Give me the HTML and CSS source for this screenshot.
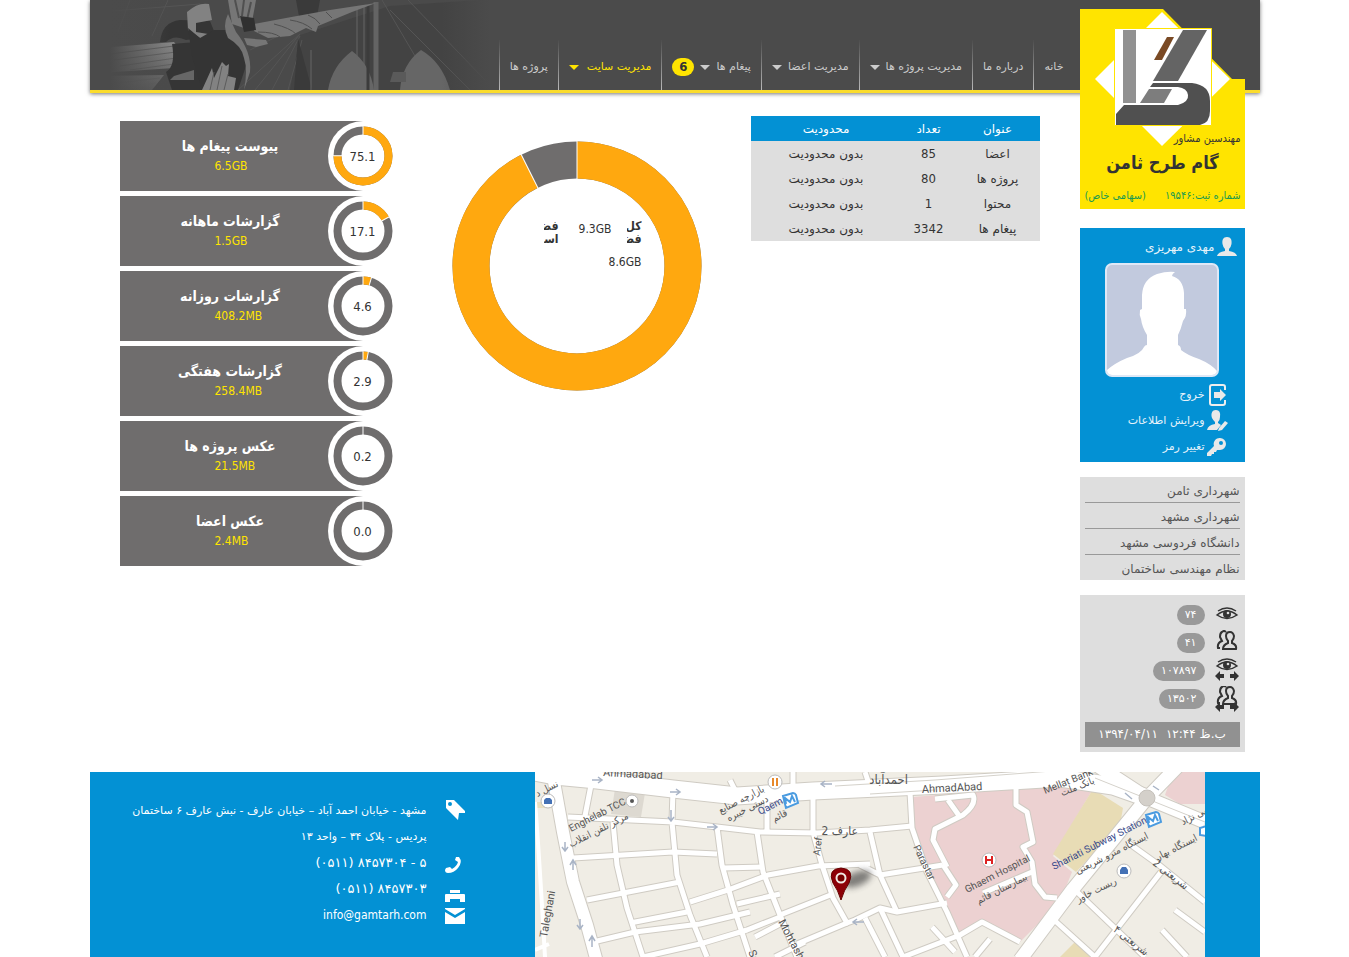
FILE: index.html
```html
<!DOCTYPE html>
<html lang="fa" dir="rtl">
<head>
<meta charset="utf-8">
<meta name="viewport" content="width=device-width, initial-scale=1">
<title>گام طرح ثامن</title>
<link rel="stylesheet" href="styles.css">
</head>
<body>
<div class="page">
  <header class="header">
    <svg class="header-photo" viewBox="0 0 400 90" aria-hidden="true">
      <defs>
        <linearGradient id="fade" x1="0" x2="1" y1="0" y2="0">
          <stop offset="0" stop-color="#4b4b4b"/><stop offset=".05" stop-color="#4b4b4b"/><stop offset=".2" stop-color="#4b4b4b" stop-opacity="0"/>
          <stop offset=".88" stop-color="#4b4b4b" stop-opacity="0"/><stop offset="1" stop-color="#4b4b4b"/>
        </linearGradient>
        <linearGradient id="rope" x1="0" x2="0" y1="0" y2="1">
          <stop offset="0" stop-color="#868686"/><stop offset="1" stop-color="#5c5c5c"/>
        </linearGradient>
      </defs>
      <rect width="400" height="90" fill="#4a4a4a"/>
      <path d="M210 35L300 6 390 0H400V90H200z" fill="#434343"/>
      <path d="M40 0L28 32M78 0L62 36M10 12L110 4M210 34L148 90M210 34L165 90M210 36L182 90M212 40L198 90M160 50L240 10M300 10L380 90M292 0L345 90M318 0L395 80" stroke="#555" fill="none"/>
      <path d="M208 38L222 90H204zM206 0H230L226 22H210z" fill="#3a3a3a"/>
      <path d="M238 90Q242 66 262 51Q280 64 284 90zM310 90Q312 64 331 50Q352 62 360 90z" fill="#666"/>
      <path d="M221 50V90M267 6V90M274 6V90" stroke="#666"/>
      <path d="M286 2V90" stroke="#646464" stroke-width="5"/>
      <path d="M278 4V90" stroke="#3c3c3c" stroke-width="3"/>
      <path d="M303 72H316V82H300z" fill="#5a5a5a"/>
      <path d="M10 48L84 42Q92 50 84 68L10 73zM10 76L74 75 62 90H10z" fill="url(#rope)"/>
      <path d="M20 54L84 46M24 60L86 52M30 66L86 58M40 70L84 64M20 84L70 78M40 88L66 83" stroke="#606060" fill="none"/>
      <path d="M70 42Q72 22 90 20L120 21 126 36 96 40Q84 34 76 42zM82 44L106 42 112 90H82L76 72Q86 66 82 44z" fill="#353535"/>
      <path d="M84 76L104 70 104 80 80 80z" fill="#666"/>
      <path d="M97 12Q108 2 119 4L122 20 106 23V32L118 34 116 42 98 30z" fill="#828282"/>
      <path d="M98 28L110 38 124 30 140 30 158 60 148 90H112L102 56z" fill="#343434"/>
      <path d="M138 0H166L162 22 154 28 142 24z" fill="#767676"/>
      <path d="M145 0L149 18M154 0L152 16M161 2L157 20" stroke="#505050" stroke-width="2"/>
      <path d="M138 14Q132 26 138 38Q152 46 154 58Q158 70 154 90L160 72Q162 52 146 32z" fill="#747474"/>
      <path d="M112 90L122 68 124 78 132 62 136 66 139 64 138 76 146 78 144 90z" fill="#828282"/>
      <path d="M124 72L120 90M132 66L127 90M138 74L134 90" stroke="#5c5c5c"/>
      <path d="M164 24L196 18 240 10 286 3 262 12 228 26 226 32 216 28 200 36 178 38 164 31zM154 38L176 40 178 44 166 47 157 45z" fill="#767676"/>
      <path d="M168 32Q184 32 190 37M184 24Q200 28 206 34M200 20Q214 22 222 29M218 15Q226 18 230 24M236 12L242 18" stroke="#505050" fill="none"/>
      <path d="M150 16L164 18 166 30 154 32z" fill="#303030"/>
      <rect width="400" height="90" fill="url(#fade)"/>
    </svg>
    <nav class="nav" aria-label="منوی اصلی">
      <a class="nav-item" href="#">خانه</a>
      <a class="nav-item" href="#">درباره ما</a>
      <a class="nav-item" href="#">مدیریت پروژه ها <i class="caret"></i></a>
      <a class="nav-item" href="#">مدیریت اعضا <i class="caret"></i></a>
      <a class="nav-item" href="#">پیغام ها <i class="caret"></i><b class="count">6</b></a>
      <a class="nav-item nav-item-active" href="#">مدیریت سایت <i class="caret"></i></a>
      <a class="nav-item" href="#">پروژه ها</a>
    </nav>
  </header>

  <div class="body">
    <aside class="sidebar">
      <a class="logo" href="#">
        <svg class="logo-art" viewBox="0 0 165 200" aria-hidden="true">
          <path d="M0 0H83L152 70H165V200H0z" fill="#ffe400"/>
          <path d="M82 3L150 70 82 137 15 70z" fill="#fff"/>
          <path d="M34.500 19.500H131.500V116.500H34.500z" fill="#fff" stroke="#ffe400"/>
          <path d="M43 21H56V94H43z" fill="#919191"/>
          <path d="M103 21H127L98 72H73z" fill="#646464"/>
          <path d="M87 28H94L82 51H74z" fill="#7a4a25"/>
          <path d="M76 80H92L84 94H60L69 80z" fill="#7d7d7d"/>
          <path d="M73 74H112Q130 76 130 92V102Q130 114 120 116H36V105L44 96H98Q109 93 108 86Q107 79 98 78H70z" fill="#505050"/>
        </svg>
        <span class="logo-kind">مهندسین مشاور</span>
        <strong class="logo-name">گام طرح ثامن</strong>
        <span class="logo-reg"><span>شماره ثبت:۱۹۵۴۶</span><span>(سهامی خاص)</span></span>
      </a>

      <section class="user">
        <div class="user-name">
          <svg width="20" height="20" viewBox="0 0 20 20"><path d="M10 0C6 0 5 3 5.500 7Q6 10 8 12V14Q1 15 0 19H20Q19 15 12 14V12Q14 10 14.500 7C15 3 14 0 10 0z"/></svg>
          <span>مهدی مهریزی</span>
        </div>
        <svg class="avatar" viewBox="0 0 110 110" role="img" aria-label="تصویر کاربر">
          <path d="M0 110V105Q8 98 20 93Q34 89 37 82Q38 80 40 80L40 70Q35 62 34 54Q32 50 33 45L35 44V30Q36 14 50 9Q60 6 68 7Q65 9 65 11Q76 14 77 28V44H79Q80 51 76 56Q74 64 71 70V80Q74 81 74 85Q80 90 92 94Q104 99 110 106V110z" fill="#fff"/>
        </svg>
        <ul class="user-menu">
          <li><a href="#"><svg width="20" height="22" viewBox="0 0 20 22"><path d="M18 6V3Q18 1 16 1H5Q3 1 3 3V19Q3 21 5 21H16Q18 21 18 19V16" fill="none" stroke="#eee" stroke-width="2"/><path d="M7 8H13V5L19 11 13 17V14H7z"/></svg>خروج</a></li>
          <li><a href="#"><svg width="20" height="22" viewBox="0 0 20 22"><path d="M9 0C4 0 4 5 5 8Q6 10 8 12V14Q1 15 0 20H10L14 15 11 13V12Q13 10 13 7Q14 0 9 0z"/><path d="M12 18L18 11 21 13 15 20 11 21z"/></svg>ویرایش اطلاعات</a></li>
          <li><a href="#"><svg width="20" height="22" viewBox="0 0 20 22"><path fill-rule="evenodd" d="M13 2A6 6 0 0 1 13 14L10 14 9 16H7V18H5L4 20H0V17L7 10A6 6 0 0 1 13 2zM14 5A2 2 0 0 0 14 9A2 2 0 0 0 14 5z"/></svg>تغییر رمز</a></li>
        </ul>
      </section>

      <ul class="links">
        <li><a href="#">شهرداری ثامن</a></li>
        <li><a href="#">شهرداری مشهد</a></li>
        <li><a href="#">دانشگاه فردوسی مشهد</a></li>
        <li><a href="#">نظام مهندسی ساختمان</a></li>
      </ul>

      <section class="stats">
        <svg class="defs" aria-hidden="true">
          <symbol id="eye" viewBox="0 0 24 14"><path d="M2 8Q12 0 22 8Q12 15 2 8zM3 4Q12-2 21 4" fill="none" stroke="#333" stroke-width="1.500"/><circle cx="12" cy="7" r="4" fill="#333"/><circle cx="13" cy="6" r="1.300" fill="#ddd"/></symbol>
          <symbol id="people" viewBox="0 0 24 22"><path d="M8 19H21Q22 15 17 13V11Q19 9 19 6Q18 2 15 2Q11 2 11 6Q11 9 13 11V13Q8 15 8 19zM11 2Q9 0 7 2Q5 3 5 7Q6 9 7 11Q2 13 3 18H5" fill="none" stroke="#333" stroke-width="2"/></symbol>
          <symbol id="arrows" viewBox="0 0 24 10"><path d="M0 5L5 0V3H9V7H5V10zM24 5L19 0V3H15V7H19V10z" fill="#333"/></symbol>
        </svg>
        <ul class="stat-list">
          <li><svg width="26" height="26"><use href="#eye" x="1" y="5" width="24" height="14"/></svg><span class="pill">۷۴</span></li>
          <li><svg width="26" height="26"><use href="#people" x="1" y="0" width="24" height="22"/></svg><span class="pill">۴۱</span></li>
          <li><svg width="26" height="26"><use href="#eye" x="1" y="0" width="24" height="14"/><use href="#arrows" x="1" y="13" width="24" height="10"/></svg><span class="pill">۱۰۷۸۹۷</span></li>
          <li><svg width="26" height="26"><use href="#people" x="1" y="-1" width="24" height="22"/><use href="#arrows" x="1" y="16" width="24" height="10"/></svg><span class="pill">۱۳۵۰۲</span></li>
        </ul>
        <div class="clock"><span>ب.ظ ۱۲:۴۴</span><span dir="ltr">۱۳۹۴/۰۴/۱۱</span></div>
      </section>
    </aside>

    <main class="content">
      <table class="limits">
        <thead><tr><th class="col-title">عنوان</th><th class="col-count">تعداد</th><th>محدودیت</th></tr></thead>
        <tbody>
          <tr><td>اعضا</td><td>85</td><td>بدون محدودیت</td></tr>
          <tr><td>پروژه ها</td><td>80</td><td>بدون محدودیت</td></tr>
          <tr><td>محتوا</td><td>1</td><td>بدون محدودیت</td></tr>
          <tr><td>پیغام ها</td><td>3342</td><td>بدون محدودیت</td></tr>
        </tbody>
      </table>

      <div class="disk">
        <svg class="disk-ring" viewBox="0 0 250 250" aria-hidden="true">
          <g transform="rotate(-90 125 125)" fill="none" stroke-width="37">
            <circle cx="125" cy="125" r="106" stroke="#6f6d6d"/>
            <circle cx="125" cy="125" r="106" stroke="#ffa80f" pathLength="1000" stroke-dasharray="926 74"/>
          </g>
          <path d="M125 0V38" stroke="#fff"/>
          <path d="M125 0V38" stroke="#fff" transform="rotate(-26.600 125 125)"/>
        </svg>
        <dl class="disk-info">
          <dt>کل<br>فضا</dt><dd>9.3GB</dd>
          <dt>فضای<br>استفاده</dt><dd class="used">8.6GB</dd>
        </dl>
      </div>

      <ul class="usage">
        <li class="card"><h3>پیوست پیغام ها</h3><p>6.5GB</p><div class="gauge"><svg viewBox="0 0 70 70"><g class="ring"><circle cx="35" cy="35" r="25.500"/><circle class="part" cx="35" cy="35" r="25.500" pathLength="1000" stroke-dasharray="751 249"/></g><path class="cut" d="M35 4V14"/><path class="cut" d="M35 4V14" transform="rotate(270.400 35 35)"/></svg><span>75.1</span></div></li>
        <li class="card"><h3>گزارشات ماهانه</h3><p>1.5GB</p><div class="gauge"><svg viewBox="0 0 70 70"><g class="ring"><circle cx="35" cy="35" r="25.500"/><circle class="part" cx="35" cy="35" r="25.500" pathLength="1000" stroke-dasharray="171 829"/></g><path class="cut" d="M35 4V14"/><path class="cut" d="M35 4V14" transform="rotate(61.600 35 35)"/></svg><span>17.1</span></div></li>
        <li class="card"><h3>گزارشات روزانه</h3><p>408.2MB</p><div class="gauge"><svg viewBox="0 0 70 70"><g class="ring"><circle cx="35" cy="35" r="25.500"/><circle class="part" cx="35" cy="35" r="25.500" pathLength="1000" stroke-dasharray="46 954"/></g><path class="cut" d="M35 4V14"/><path class="cut" d="M35 4V14" transform="rotate(16.600 35 35)"/></svg><span>4.6</span></div></li>
        <li class="card"><h3>گزارشات هفتگی</h3><p>258.4MB</p><div class="gauge"><svg viewBox="0 0 70 70"><g class="ring"><circle cx="35" cy="35" r="25.500"/><circle class="part" cx="35" cy="35" r="25.500" pathLength="1000" stroke-dasharray="29 971"/></g><path class="cut" d="M35 4V14"/><path class="cut" d="M35 4V14" transform="rotate(10.400 35 35)"/></svg><span>2.9</span></div></li>
        <li class="card"><h3>عکس پروژه ها</h3><p>21.5MB</p><div class="gauge"><svg viewBox="0 0 70 70"><g class="ring"><circle cx="35" cy="35" r="25.500"/></g><path class="cut" d="M35 4V14"/></svg><span>0.2</span></div></li>
        <li class="card"><h3>عکس اعضا</h3><p>2.4MB</p><div class="gauge"><svg viewBox="0 0 70 70"><g class="ring"><circle cx="35" cy="35" r="25.500"/></g><path class="cut" d="M35 4V14"/></svg><span>0.0</span></div></li>
      </ul>
    </main>
  </div>

  <footer class="footer">
    <svg class="map" viewBox="0 0 670 185" preserveAspectRatio="xMidYMid slice" role="img" aria-label="نقشه" direction="ltr">
      <defs>
        <filter id="soft" x="-50%" y="-50%" width="200%" height="200%"><feGaussianBlur stdDeviation="3"/></filter>
        <g id="small">
          <path d="M57 8L50 44M33 45L138 50 182 55 225 60 282 61 335 58 377 54M78 50L82 93 92 136 108 185M138 18L137 50 142 103 155 143 172 185M182 55L187 93 198 133 215 185M222 60L228 100 245 143 262 185M232 60V25M278 20V60L287 93 298 126 312 151 320 148 345 136 362 140 412 131"/>
          <path d="M38 86L138 80 182 82M188 96L228 95M52 128L145 110M95 151L152 140M155 130L193 118 233 103 283 94 335 92M202 132L245 122M245 143L298 122M58 170L100 160 165 152 215 140M108 185L165 172 212 158 245 145M220 165L245 152M262 172L312 151M240 185L270 170"/>
          <path d="M375 20L377 56 392 100 412 140 432 185M335 60L345 103 362 140M325 93L345 103 408 93M345 136L368 185 425 163 447 150 485 170M330 146L350 185M397 155L420 180M455 167L440 185M408 93L421 113 412 125"/>
          <path d="M400 27L438 23Q442 32 428 43L400 57 398 68 412 95M413 28L425 45M481 17V33L492 40 498 70 488 75 497 90 500 112 510 125 522 126M448 121L497 100"/>
          <path d="M592 70L624 93 670 130M540 118L610 185M626 100L560 185M518 147L560 185M640 138L670 160M627 158L652 185M195 8L200 18M258 0V18M330 0L335 15"/>
        </g>
        <g id="big">
          <path d="M18 4L28 60 38 110 52 153 62 190" stroke-width="12"/>
          <path d="M0 0L20 4 62 8 138 17 202 24 278 19 408 13 525 6 578 14 612 26" stroke-width="17"/>
          <path d="M645 -8L612 26 538 117 485 188M612 26L670 50M612 26L560 -8" stroke-width="13"/>
        </g>
      </defs>
      <rect width="670" height="185" fill="#f0ede5"/>
      <path d="M80 17L110 21 106 45 76 42z" fill="#ddd9d1"/>
      <path d="M0 30H20V36H0z" fill="#e9dfbf"/>
      <path d="M378 25L482 16 555 10 558 17 518 84 537 100 525 130 485 170 448 148 425 160 412 140 380 60z" fill="#ecd1d1"/>
      <path d="M638 0H670V32H645L630 23z" fill="#ecd1d1"/>
      <path d="M558 17L588 36 585 53 541 100 518 82z" fill="#e8dcb5"/>
      <path d="M540 170L560 185H525z" fill="#e8dcb5"/>
      <g fill="none" stroke="#cfcbc3" stroke-linejoin="round"><use href="#small" stroke-width="7"/></g>
      <g fill="none" stroke="#cfcbc3"><path d="M18 4L28 60 38 110 52 153 62 190" stroke-width="14"/><path d="M0 0L20 4 62 8 138 17 202 24 278 19 408 13 525 6 578 14 612 26" stroke-width="19"/><path d="M645 -8L612 26 538 117 485 188M612 26L670 50M612 26L560 -8" stroke-width="15"/></g>
      <g fill="none" stroke="#fff" stroke-linejoin="round"><use href="#small" stroke-width="5"/><use href="#big"/></g>
      <path d="M0 30Q4 80 10 185M0 178L14 172" fill="none" stroke="#fff" stroke-width="4"/>
      <path d="M300 14L400 8 530 -2M560 6L670 50M335 22L400 18" fill="none" stroke="#d5d2cb"/>
      <circle cx="612" cy="26" r="8" fill="#d4d0ca" stroke="#c5c1bb"/>
      <g fill="none" stroke="#a9b4c6" stroke-width="1.500">
        <path id="arr" d="M57 8H66M63 5L67 8 63 11"/><use href="#arr" x="78" y="12"/><use href="#arr" x="115" y="47"/>
        <path d="M297 12H287M290 9L286 12 290 15M329 150H319M322 147L318 150 322 153M136 38V49M133 45L136 49 139 45M30 70V78M27 75L30 79 33 75M38 98V89M35 93L38 88 41 93M45 147V157M42 153L45 157 48 153M57 175V165M54 169L57 164 60 169M590 21L597 27M618 14L624 18"/>
      </g>
      <g class="map-text">
        <text x="68" y="4" font-size="11" transform="rotate(3 68 4)">Ahmadabad</text>
        <text x="36" y="60" font-size="10" transform="rotate(-27 36 60)">Enghelab TCC</text>
        <text class="fa" x="94" y="46" font-size="10" transform="rotate(-27 94 46)">مرکز تلفن انقلاب</text>
        <text class="fa" x="24" y="14" font-size="10" transform="rotate(-27 24 14)">نسل د</text>
        <text class="fa" x="230" y="19" font-size="10" transform="rotate(-27 230 19)">بازارچه صنایع</text>
        <text class="fa" x="234" y="29" font-size="10" transform="rotate(-27 234 29)">دستی خیبره</text>
        <text x="225" y="43" font-size="10" class="metro" transform="rotate(-27 225 43)">Qaem</text>
        <text class="fa" x="253" y="43" font-size="10" transform="rotate(-27 253 43)">قائم</text>
        <text class="fa" x="323" y="63" font-size="12">عارف 2</text>
        <text x="285" y="84" font-size="10" transform="rotate(-84 285 84)">Aref</text>
        <text x="12" y="166" font-size="11" transform="rotate(-80 12 166)">Taleghani</text>
        <text x="243" y="150" font-size="11" transform="rotate(62 243 150)">Mohtasham</text>
        <text x="213" y="180" font-size="11" transform="rotate(65 213 180)">Sa</text>
        <text class="fa" x="373" y="12" font-size="13">احمدآباد</text>
        <text x="387" y="21" font-size="11" transform="rotate(-3 387 21)">AhmadAbad</text>
        <text x="378" y="75" font-size="10" transform="rotate(64 378 75)">Parastar</text>
        <text x="432" y="121" font-size="10" transform="rotate(-27 432 121)">Ghaem Hospital</text>
        <text class="fa" x="493" y="107" font-size="10" transform="rotate(-27 493 107)">بیمارستان قائم</text>
        <text x="510" y="22" font-size="10" transform="rotate(-22 510 22)">Mellat Bank</text>
        <text class="fa" x="560" y="11" font-size="10" transform="rotate(-22 560 11)">بانک ملت</text>
        <text x="519" y="98" font-size="10" class="metro" transform="rotate(-27 519 98)">Shariati Subway Station</text>
        <text class="fa" x="614" y="66" font-size="10" transform="rotate(-27 614 66)">ایستگاه مترو شریعتی</text>
        <text class="fa" x="582" y="111" font-size="10" transform="rotate(-27 582 111)">ریست خاور</text>
        <text class="fa" x="674" y="40" font-size="10" transform="rotate(-27 674 40)">می نژاد</text>
        <text class="fa" x="663" y="68" font-size="10" transform="rotate(-27 663 68)">ایستگاه بهار</text>
        <text class="fa" x="650" y="118" font-size="11" transform="rotate(38 650 118)">شریعتی 2</text>
        <text class="fa" x="610" y="184" font-size="11" transform="rotate(38 610 184)">شریعتی ۴</text>
      </g>
      <g fill="#fff" stroke="#bbb">
        <circle cx="97" cy="29" r="6"/><circle cx="240" cy="10" r="7"/><circle cx="13" cy="29" r="7"/><circle cx="454" cy="88" r="7"/><circle cx="589" cy="99" r="7"/>
      </g>
      <circle cx="97" cy="29" r="2" fill="#555"/>
      <path d="M238 6V14M242 6V14" stroke="#e8892b" stroke-width="2"/>
      <path d="M9 32V28L11 26H15L17 28V32zM585 102V98L587 95H591L593 98V102z" fill="#4471b5"/>
      <path d="M451 84V92M457 84V92M451 88H457" stroke="#d22" stroke-width="2"/>
      <g fill="#fff" stroke="#4a9be0" stroke-width="2">
        <path id="metro" d="M248 24L258 21Q260 21 261 23L263 31 251 36zM251 32L250 26 255 30 257 24 260 30"/><use href="#metro" x="363" y="19"/>
        <path d="M672 54L665 56V63L672 64"/>
      </g>
      <ellipse cx="322" cy="107" rx="15" ry="7" fill="#333" opacity=".6" filter="url(#soft)" transform="rotate(-22 322 107)"/>
      <path d="M306 128Q303 118 298 111Q292 97 306 96Q320 97 314 111Q309 118 306 128z" fill="#8d0007" stroke="#600"/>
      <circle cx="306" cy="106" r="4.500" fill="#700" stroke="#f1e9e4" stroke-width="2"/>
    </svg>
    <address class="contact">
      <div class="contact-icons">
        <svg class="tag" width="20" height="20" viewBox="0 0 20 20"><path fill-rule="evenodd" d="M1 0H9L20 11V13H14L13 20L1 8zM5 2A2 2 0 0 0 5 6A2 2 0 0 0 5 2z"/></svg>
        <svg class="phone" width="20" height="18" viewBox="0 0 20 18"><path d="M11 1L14 1Q18 6 13 12Q9 17 3 17Q0 17 0 14L1 12 5 11 7 13Q12 10 13 6L10 4z"/></svg>
        <svg width="20" height="14" viewBox="0 0 20 14"><path d="M5 0H15V3H5zM1 4H19Q20 4 20 5V12H15V9H5V12H0V5Q0 4 1 4z"/></svg>
        <svg width="20" height="16" viewBox="0 0 20 16"><path d="M0 0H20V1L10 7 0 1zM0 4L10 10 20 4V16H0z"/></svg>
      </div>
      <div class="contact-text">
        <p>مشهد - خیابان احمد آباد – خیابان عارف - نبش عارف ۶ ساختمان پردیس - پلاک ۳۴ – واحد ۱۳</p>
        <p class="num"><span dir="ltr">(۰۵۱۱) ۸۴۵۷۳۰۴ - ۵</span></p>
        <p class="num"><span dir="ltr">(۰۵۱۱) ۸۴۵۷۳۰۳</span></p>
        <p><a href="mailto:info@gamtarh.com">info@gamtarh.com</a></p>
      </div>
    </address>
  </footer>
</div>
</body>
</html>
```

FILE: styles.css
```css
* { box-sizing: border-box; }
body { margin: 0; background: #fff; color: #333; font: 11px/16px "DejaVu Sans", sans-serif; }
ul, dl, dd, p, h3 { margin: 0; padding: 0; list-style: none; }
a { color: inherit; text-decoration: none; }
.page { max-width: 1170px; margin: 0 auto; }
.logo, .disk-info, .card, .count, .contact-text a, .limits td:nth-child(2) { font-family: "DejaVu Sans Condensed", "DejaVu Sans", sans-serif; }

.header { display: flex; position: relative; height: 93px; padding-right: 186px; align-items: flex-end; background: #4b4b4b; border-bottom: 3px solid #fbdc2c; box-shadow: 0 1px 4px #777; }
.header-photo { position: absolute; left: 0; top: 0; width: 400px; height: 90px; }
.nav { display: flex; position: relative; }
.nav-item { display: flex; height: 50px; padding: 4px 10px 0; align-items: center; gap: 6px; color: #ccc; white-space: nowrap; border-left: 1px solid; border-image: linear-gradient(#4b4b4b, #bbb) 1; }
.nav-item-active { gap: 8px; color: #ffe400; }
.caret { border: 5px solid transparent; border-top-color: currentColor; border-bottom: 0; }
.count { min-width: 22px; border-radius: 9px; background: #ffe400; color: #333; font-size: 13px; line-height: 18px; text-align: center; }

.body { display: flex; }
.sidebar { position: relative; flex: 0 0 165px; margin: -84px 15px 20px 0; }
.logo { display: flex; position: relative; height: 200px; padding: 0 4px 4px 5px; flex-direction: column; justify-content: flex-end; color: #333; }
.logo-art { position: absolute; inset: 0; width: 165px; height: 200px; }
.logo-kind, .logo-name, .logo-reg { position: relative; }
.logo-name { margin-bottom: 8px; font-size: 18px; line-height: 32px; text-align: center; }
.logo-reg { display: flex; justify-content: space-between; color: #1a9a50; line-height: 18px; white-space: nowrap; }

.user { margin-top: 19px; padding: 9px 8px 2px; background: #0391d4; color: #e6f3fb; }
.user svg { fill: #e9e9e9; }
.user-name { display: flex; gap: 2px; align-items: center; height: 20px; font-size: 12px; }
.user .avatar { display: block; width: 114px; height: 114px; margin: 6px 18px 5px 0; border: 2px solid #dfe8f6; border-radius: 7px; background: #c2cade; }
.user-menu { padding-right: 10px; }
.user-menu svg { overflow: visible; }
.user-menu a { display: flex; height: 26px; gap: 2px; align-items: center; }

.links { margin-top: 15px; padding: 0 5px; background: #dedede; color: #555; font-size: 12px; }
.links li { padding: 6px 0 3px; border-bottom: 1px solid #999; }
.links li:last-child { border: 0; }
.links a { display: block; }

.stats { margin-top: 15px; padding: 5px; background: #dedede; }
.defs { position: absolute; width: 0; height: 0; }
.stat-list { display: grid; gap: 2px; padding-top: 2px; }
.stat-list li { display: flex; height: 26px; gap: 9px; align-items: center; }
.pill { padding: 0 8px; border-radius: 10px; background: #999; color: #fff; line-height: 20px; }
.clock { display: flex; margin-top: 10px; justify-content: center; gap: 8px; background: #919191; color: #fff; font-size: 12px; line-height: 25px; }

.content { display: flex; flex: 1; align-items: flex-start; padding: 23px 40px 0 30px; }
.limits { width: 289px; border-collapse: collapse; background: #dedede; text-align: center; table-layout: fixed; font-size: 12px; }
.limits th, .limits td { height: 25px; padding: 0; font-weight: normal; }
.limits td:nth-child(2) { font-size: 13px; }
.limits th { background: #0391d4; color: #fff; }
.col-title { width: 84px; }
.col-count { width: 54px; }

.disk { position: relative; width: 250px; margin: 25px 49px 0 0; }
.disk-ring { display: block; width: 250px; height: 250px; }
.disk-info { display: grid; position: absolute; top: 79px; right: 60px; grid-template-columns: 15px 38px 15px; column-gap: 15px; row-gap: 10px; font-size: 12px; line-height: 13px; }
.disk-info dt { overflow: hidden; font-weight: bold; white-space: nowrap; }
.disk-info dd { padding-top: 3px; }
.disk-info .used { padding: 0; grid-column: 1 / 3; }

.usage { display: grid; gap: 5px; width: 243px; margin: 5px auto 0 0; }
.card { position: relative; height: 70px; padding: 15px 22px 0 0; background: #6f6d6d; color: #fff; }
.card h3 { font-size: 14px; line-height: 20px; text-align: center; }
.card p { padding-left: 95px; color: #ffe400; font-size: 12px; line-height: 20px; text-align: left; }
.gauge { display: flex; position: absolute; top: 0; right: -35px; width: 70px; height: 70px; padding-top: 2px; align-items: center; justify-content: center; border-radius: 50%; background: #fff; color: #333; font-size: 13px; }
.gauge svg { position: absolute; inset: 0; }
.gauge span { position: relative; }
.ring { fill: none; stroke: #6f6d6d; stroke-width: 8px; transform: rotate(-90deg); transform-origin: 35px 35px; }
.part { stroke: #ffa80f; }
.cut { stroke: #fff; }

.footer { display: flex; padding-right: 55px; background: #0391d4; }
.map { display: block; flex: 0 1 670px; min-width: 0; height: 185px; }
.map-text { fill: #555; font-family: Roboto, sans-serif; }
.map-text .fa { direction: rtl; font-family: "DejaVu Sans Condensed", "DejaVu Sans", sans-serif; }
.map-text .metro { fill: #3b4c8c; }
.contact { display: flex; flex: 1; gap: 18px; padding: 26px 70px 0 20px; color: #fff; font-style: normal; line-height: 26px; }
.contact-icons { display: flex; flex-direction: column; gap: 4px; padding-top: 2px; fill: #fff; }
.contact-icons .phone { margin: 32px 0 12px; }
.contact-text { flex: 0 1 310px; }
.contact-text p { height: 26px; }
.contact-text p:first-child { height: auto; }
.contact-text .num { font-size: 13px; }
.contact-text a { font-size: 12px; }
```
